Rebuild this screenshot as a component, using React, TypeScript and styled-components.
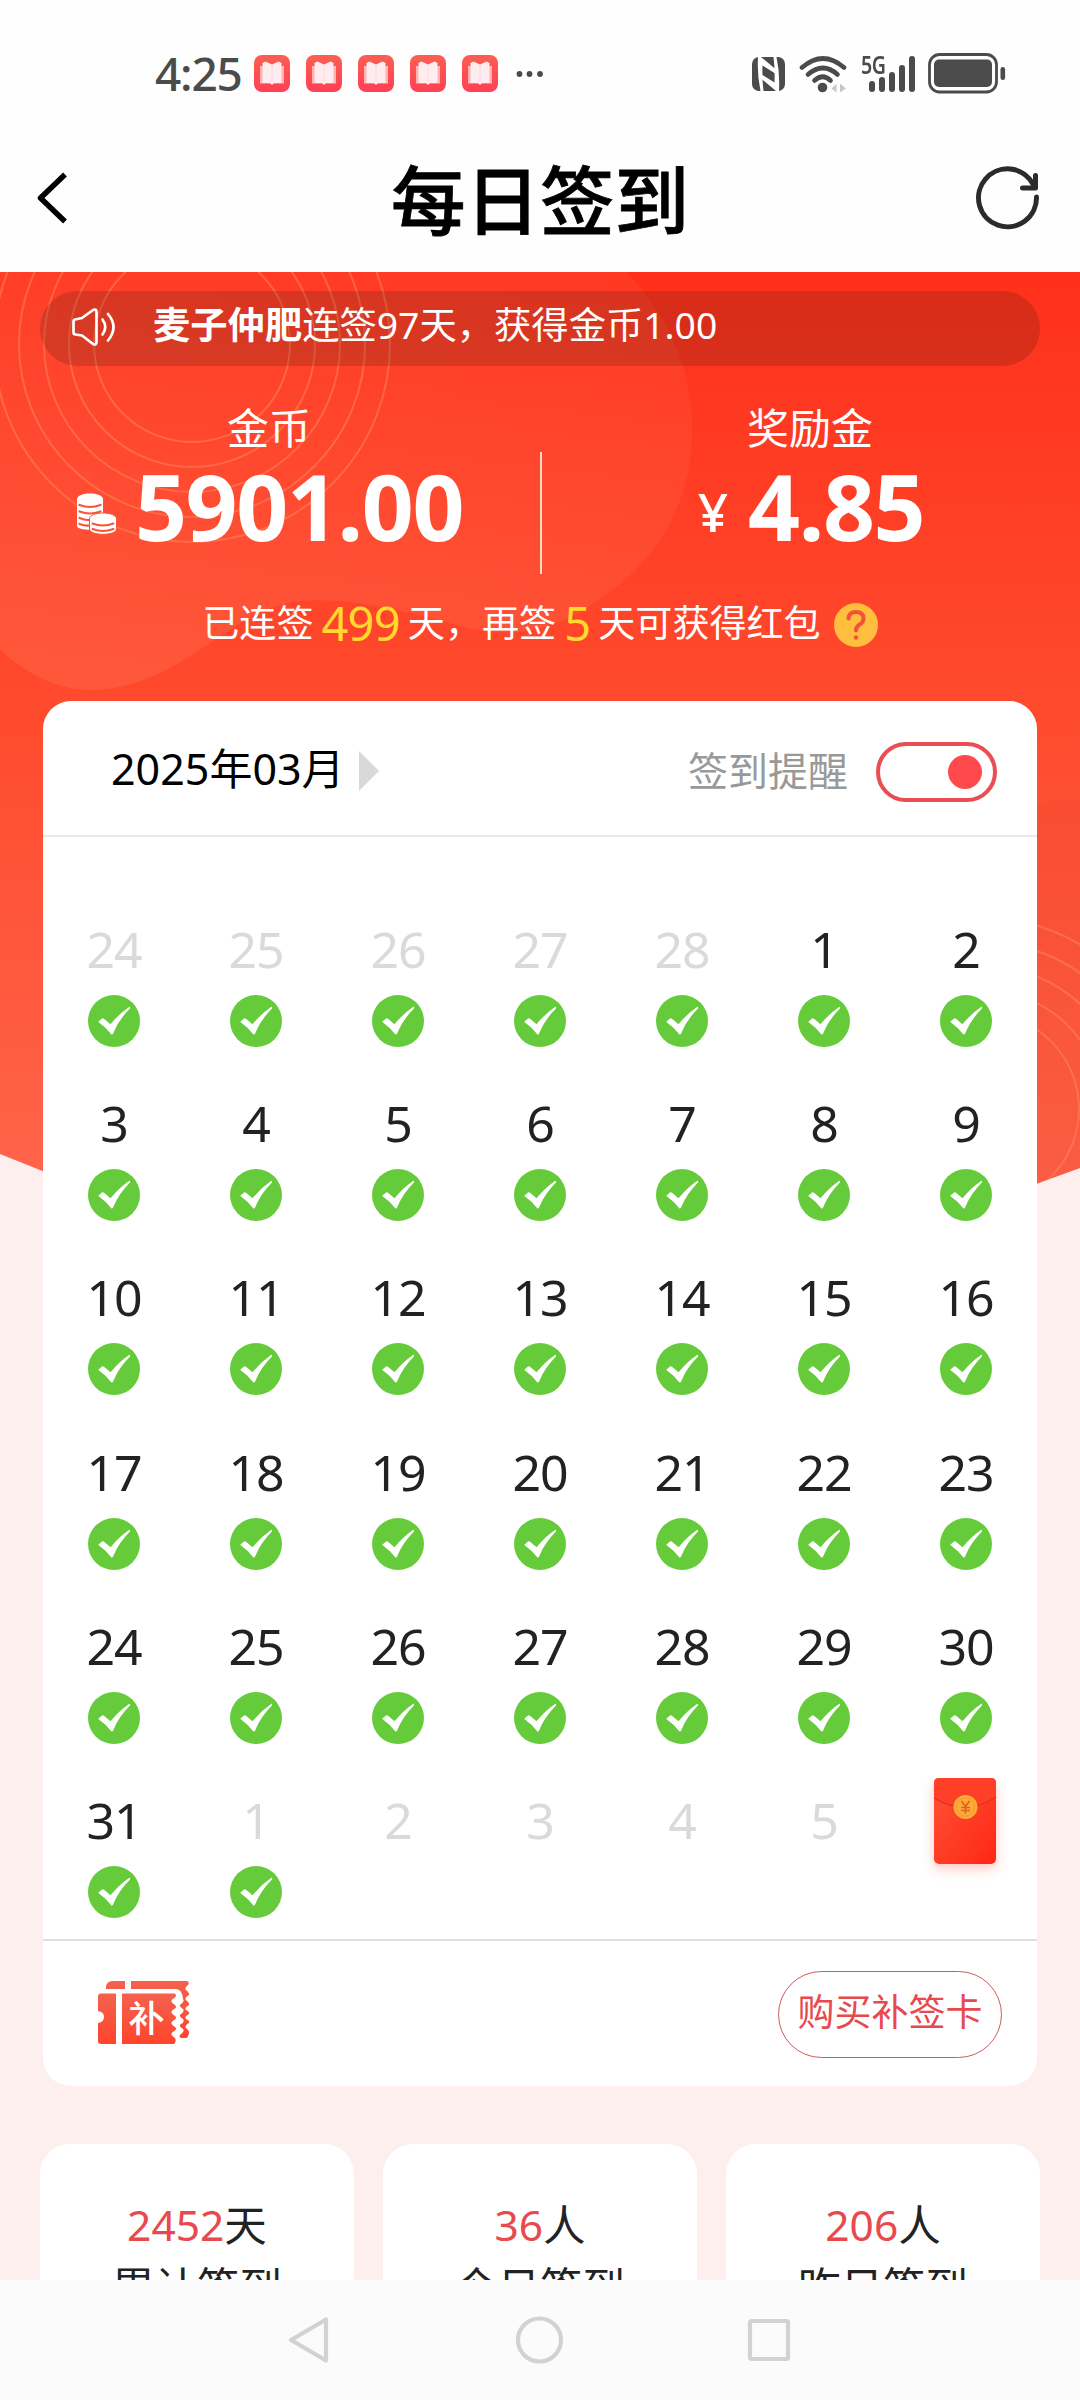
import React from "react";
import styled, { createGlobalStyle } from "styled-components";

const GlobalStyle = createGlobalStyle`
  * { box-sizing: border-box; }
  body {
    margin: 0;
    background: #fff;
    font-family: "Noto Sans", "Noto Sans CJK SC", sans-serif;
  }
  svg { display: block; flex: none; }
`;

const Screen = styled.div`
  width: 1080px;
  height: 2400px;
  display: flex;
  flex-direction: column;
  overflow: hidden;
  background: #fefefe;
`;

const StatusBar = styled.header`
  height: 124px;
  padding: 23px 74px 0 155px;
  display: flex;
  align-items: center;
  justify-content: space-between;
  color: #4b4b4b;
`;

const StatusGroup = styled.div<{ $gap: number }>`
  display: flex;
  align-items: center;
  gap: ${(p) => p.$gap}px;
`;

const Clock = styled.span`
  width: 83px;
  padding-bottom: 2px;
  font-size: 46px;
  line-height: 60px;
  font-weight: 500;
  letter-spacing: -1.2px;
`;

const Signal = styled.div`
  display: flex;
  align-items: flex-end;
  width: 53px;
  height: 38px;
`;

const NetworkLabel = styled.span`
  align-self: flex-start;
  width: 8px;
  font: 600 24.5px/20px "Noto Sans", sans-serif;
  letter-spacing: -0.5px;
  white-space: nowrap;
  transform: scaleX(0.8);
  transform-origin: 0 0;
`;

const SignalBars = styled.div`
  display: flex;
  align-items: flex-end;
  gap: 4px;
  padding-bottom: 1px;
`;

const SignalBar = styled.i<{ $h: number }>`
  width: 6px;
  height: ${(p) => p.$h}px;
  border-radius: 3px;
  background: #4b4b4b;
`;

const TitleBar = styled.div`
  height: 148px;
  padding: 0 39px 0 36px;
  display: flex;
  align-items: center;
  justify-content: space-between;
`;

const Title = styled.h1`
  margin: 0;
  padding: 3px 0 0 3px;
  font-size: 74.5px;
  line-height: 100px;
  font-weight: 500;
  color: #000;
  -webkit-text-stroke: 0.8px #000;
`;

const TitleSide = styled.div<{ $end?: boolean }>`
  width: 66px;
  display: flex;
  justify-content: ${(p) => (p.$end ? "flex-end" : "flex-start")};
`;

const Body = styled.main`
  position: relative;
  height: 2008px;
  flex: none;
  overflow: hidden;
  background: #feefef;
`;

const Backdrop = styled.svg`
  position: absolute;
  left: 0;
  top: 0;
`;

const Content = styled.div`
  position: relative;
  padding-top: 19px;
  display: flex;
  flex-direction: column;
`;

const Notice = styled.div`
  height: 75px;
  margin: 0 40px;
  padding-left: 32px;
  border-radius: 38px;
  background: rgba(40, 20, 10, 0.18);
  display: flex;
  align-items: center;
  gap: 35px;
  color: #fff;
  font-size: 37.3px;
  line-height: 60px;
  white-space: nowrap;

  svg { margin-bottom: 4px; }
`;

const NoticeText = styled.span`
  padding-bottom: 8px;
  b { font-weight: 700; }
`;

const Balances = styled.section`
  height: 207px;
  display: grid;
  grid-template-columns: 540px 2px 538px;
  color: #fff;
`;

const Balance = styled.div`
  padding: 35px 2px 0 0;
  display: flex;
  flex-direction: column;
  align-items: center;
`;

const BalanceLabel = styled.span`
  font-size: 42px;
  line-height: 54px;
`;

const Amount = styled.div<{ $gap: number }>`
  display: flex;
  align-items: center;
  gap: ${(p) => p.$gap}px;
  height: 104px;

  svg { margin-top: 13px; }
`;

const AmountValue = styled.strong`
  margin-right: -2px;
  padding-bottom: 2px;
  font-size: 91px;
  line-height: 102px;
  font-weight: 700;
  letter-spacing: -1.4px;
`;

const Yen = styled.span`
  padding-top: 9px;
  font-size: 53px;
  font-weight: 500;
`;

const BalanceRule = styled.i`
  height: 122px;
  margin-top: 86px;
  background: rgba(255, 238, 214, 0.9);
`;

const Streak = styled.p`
  height: 60px;
  margin: 20px 0 0;
  display: flex;
  align-items: center;
  justify-content: center;
  color: #fff;
  font-size: 37.1px;
  line-height: 60px;
  white-space: nowrap;
`;

const StreakCount = styled.em`
  margin: 0 8px;
  font-style: normal;
  font-size: 47px;
  letter-spacing: -0.8px;
  color: #ffd92e;
`;

const Help = styled.span`
  width: 44px;
  height: 44px;
  margin: 4px 0 0 13px;
  border-radius: 50%;
  background: #ffbe3d;
  display: flex;
  align-items: center;
  justify-content: center;
`;

const Card = styled.section`
  width: 994px;
  height: 1385px;
  margin: 48px 0 0 43px;
  border-radius: 28px;
  background: #fff;
`;

const CardHeader = styled.div`
  height: 136px;
  padding: 0 40px 0 68px;
  border-bottom: 2px solid #e9e9e9;
  display: flex;
  align-items: center;
`;

const Month = styled.span`
  padding-top: 2px;
  font-size: 43px;
  line-height: 60px;
  color: #000;
`;

const MonthArrow = styled.i`
  margin: 6px 0 0 14px;
  border-left: 20px solid #d9d9d9;
  border-top: 20px solid transparent;
  border-bottom: 20px solid transparent;
`;

const Reminder = styled.span`
  margin-left: auto;
  padding-top: 1px;
  font-size: 40px;
  color: #999;
`;

const Toggle = styled.div`
  width: 121px;
  height: 60px;
  margin: 7px 0 0 28px;
  padding-right: 11px;
  border: 4px solid #e94e54;
  border-radius: 30px;
  display: flex;
  align-items: center;
  justify-content: flex-end;
`;

const Knob = styled.i`
  width: 34px;
  height: 34px;
  border-radius: 50%;
  background: #ff494d;
`;

const Days = styled.div`
  height: 1104px;
  padding-top: 82px;
  border-bottom: 2px solid #dfdfdf;
  display: grid;
  grid-template-columns: repeat(7, 142px);
  grid-auto-rows: 174.2px;
  overflow: hidden;
`;

const Day = styled.div`
  display: flex;
  flex-direction: column;
  align-items: center;
`;

const DayNumber = styled.span<{ $muted: boolean }>`
  height: 60px;
  font-size: 50px;
  line-height: 60px;
  letter-spacing: -1px;
  color: ${(p) => (p.$muted ? "#dadada" : "#222")};
`;

const CheckMark = styled.svg`
  margin-top: 16px;
`;

const EnvelopeBox = styled.div`
  margin: -12px 2px 0 0;
`;

const CardFooter = styled.div`
  height: 145px;
  padding: 0 35px 0 55px;
  display: flex;
  align-items: center;
  justify-content: space-between;
`;

const BuyButton = styled.button`
  width: 224px;
  height: 87px;
  margin-top: 1px;
  padding: 0 0 4px;
  border: 1.5px solid #cf5a60;
  border-radius: 44px;
  background: #fff;
  color: #e8494e;
  font: 400 37px/50px "Noto Sans", "Noto Sans CJK SC", sans-serif;
`;

const Stats = styled.section`
  margin: 58px 40px 0;
  display: grid;
  grid-template-columns: repeat(3, 314px);
  justify-content: space-between;
`;

const Stat = styled.div`
  height: 220px;
  padding: 51px 0 0;
  border-radius: 30px;
  background: #fff;
  color: #222;
  font-size: 42.5px;
  line-height: 60px;
  text-align: center;
`;

const StatNumber = styled.span`
  color: #e8494e;
`;

const StatLabel = styled.div`
  padding-top: 2px;
`;

const NavBar = styled.nav`
  height: 120px;
  flex: none;
  padding: 0 289px 0 286px;
  background: #fbfbfb;
  display: flex;
  align-items: center;
  justify-content: space-between;
`;

const BookIcon = () => (
  <svg width="36" height="37" viewBox="0 0 36 37">
    <defs>
      <linearGradient id="book" x1="0" y1="0" x2="0" y2="1">
        <stop offset="0" stopColor="#fb5f50" />
        <stop offset="1" stopColor="#ff3f55" />
      </linearGradient>
    </defs>
    <rect width="36" height="37" rx="8" fill="url(#book)" />
    <path d="M6 11h24v17.500H6z" fill="#ffb3b3" />
    <path d="M8.500 8l3-1.500L18 9.500l6.500-3L27.500 8v20h-7.500l-2 2-2-2H8.500z" fill="#ffecef" />
    <path d="M18 10v18" stroke="#ffdbe0" strokeWidth="1" />
  </svg>
);

const MoreDots = () => (
  <svg width="30" height="8" viewBox="0 0 30 8" fill="#4b4b4b">
    <circle cx="5.500" cy="4" r="2.900" />
    <circle cx="15.500" cy="4" r="2.900" />
    <circle cx="26" cy="4" r="2.900" />
  </svg>
);

const NfcIcon = () => (
  <svg width="33" height="34" viewBox="0 0 33 34">
    <rect width="33" height="34" rx="7" fill="#4b4b4b" />
    <path d="M6 0H9L24 12.500V17L10.500 8.500Q10 22 11.500 34H8.500Q5 18 6 0z" fill="#fff" />
    <path d="M27 34H24L9 21.500V17L22.500 25.500Q23 12 21.500 0H24.500Q28 16 27 34z" fill="#fff" />
  </svg>
);

const WifiIcon = () => (
  <svg width="48" height="38" viewBox="0 0 48 38" fill="none" stroke="#4b4b4b" strokeWidth="4.600" strokeLinecap="round">
    <path d="M3 12.500Q24-5.500 45 12.500" />
    <path d="M9 19.500Q24 6.500 38.500 19.500" />
    <path d="M15.500 25.500Q24 18 31.500 25.500" />
    <circle cx="23.500" cy="32.500" r="4.800" fill="#4b4b4b" stroke="none" />
    <path d="M37.500 28.500v9l-5-4zM41 28.500v9l6-4z" fill="#c8c8c8" stroke="none" />
  </svg>
);

const BatteryIcon = () => (
  <svg width="78" height="41" viewBox="0 0 78 41">
    <rect x="1.500" y="1.500" width="67" height="37.500" rx="10" fill="none" stroke="#4b4b4b" strokeWidth="2.800" />
    <rect x="6" y="6.500" width="58" height="27.500" rx="5" fill="#4b4b4b" />
    <rect x="72.500" y="14" width="4.600" height="13" rx="2.300" fill="#4b4b4b" />
  </svg>
);

const BackIcon = () => (
  <svg width="32" height="56" viewBox="0 0 32 56" fill="none" stroke="#000" strokeWidth="5.500" strokeLinejoin="round">
    <path d="M29 4.500L4.500 28 29 51.500" />
  </svg>
);

const RefreshIcon = () => (
  <svg width="66" height="66" viewBox="0 0 66 66" fill="none" stroke="#2b2b2b" strokeWidth="5" strokeLinecap="round" strokeLinejoin="round">
    <path d="M61.500 32A29 29 0 1 1 58 19" />
    <path d="M60.500 10.500V23H47.500" />
  </svg>
);

const SpeakerIcon = () => (
  <svg width="46" height="38" viewBox="0 0 46 38" fill="none" stroke="#fff" strokeWidth="2.700" strokeLinecap="round" strokeLinejoin="round">
    <path d="M3 11.500Q1.500 11.500 1.500 14v10q0 2.500 2 2.500l6.500 1L21 36q3.500 1.500 3.500-2V4q0-3.500-3.500-2L10 10z" />
    <path d="M30.500 11.500Q36 19 30.500 26.500" />
    <path d="M36 6Q47 19 36 32.500" />
  </svg>
);

const CoinsIcon = () => (
  <svg width="40" height="42" viewBox="0 0 40 42">
    <path d="M0 6C0-1.500 26-1.500 26 6v27c0 5-26 5-26 0z" fill="#fff" />
    <g fill="none" stroke="#fb5335" strokeWidth="2.200" strokeLinecap="round">
      <path d="M2.500 12q10.500 4 21 0M2.500 18.500q10.500 4 21 0M2.500 25q7 3 12 1.500M2.500 31q5 2 10 1.500" />
    </g>
    <path d="M12.500 26C12.500 18 39.500 18 39.500 26v10c0 7-27 7-27 0z" fill="#fff" stroke="#fb5335" strokeWidth="1" />
    <path d="M15.500 30.500q10.500 4 21 0M15.500 36q10.500 4 21 0" fill="none" stroke="#fb5335" strokeWidth="2" strokeLinecap="round" />
  </svg>
);

const QuestionIcon = () => (
  <svg width="24" height="32" viewBox="0 0 24 32" fill="none" stroke="#f4513a" strokeWidth="4" strokeLinecap="round" strokeLinejoin="round">
    <path d="M4.500 9.500Q5 3 12 3q7.500 0 7.500 6.500 0 4-4.500 6.500-3 2-3 5.500" />
    <circle cx="12" cy="28.500" r="2.200" fill="#f4513a" stroke="none" />
  </svg>
);

const Check = () => (
  <CheckMark width="52" height="52" viewBox="0 0 52 52">
    <circle cx="26" cy="26" r="26" fill="#66cb3a" />
    <path d="M10.500 26.500l3.500-3q1-.5 2 .3l6.500 5.500q8-10 18.500-17.300 1.500-.6 1 1.500Q31 24.500 26 36.500q-1.500 4.500-3 2.500-5.500-7-12-11.500-1-.5-.5-1z" fill="#fff" />
  </CheckMark>
);

const Envelope = () => (
  <EnvelopeBox>
    <svg width="94" height="112" viewBox="-16 0 94 112">
      <defs>
        <linearGradient id="env" x1="0" y1="0" x2="1" y2="1">
          <stop offset="0" stopColor="#ff5238" />
          <stop offset="1" stopColor="#ff2714" />
        </linearGradient>
        <filter id="envShadow" x="-40%" y="-30%" width="180%" height="170%">
          <feDropShadow dx="0" dy="5" stdDeviation="6" floodColor="#ff5038" floodOpacity="0.3" />
        </filter>
      </defs>
      <rect width="62" height="86" rx="5" fill="url(#env)" filter="url(#envShadow)" />
      <path d="M0 20Q31 39 62 19V5q0-5-5-5H5Q0 0 0 5z" fill="#ff3f28" />
      <path d="M0 20Q31 39 62 19" fill="none" stroke="#dc3320" strokeWidth="1.400" />
      <circle cx="31.500" cy="29" r="12" fill="#fbac35" />
      <circle cx="31.500" cy="29" r="9" fill="none" stroke="#f8983a" strokeWidth="1" />
      <path d="M27.500 23l4 5.500 4-5.500M27 29.500h9M27 32.500h9M31.500 28.500v7" fill="none" stroke="#ea5b26" strokeWidth="1.700" />
    </svg>
  </EnvelopeBox>
);

const TicketIcon = () => (
  <svg width="92" height="66" viewBox="0 0 92 66">
    <defs>
      <linearGradient id="ticket" x1="0" y1="0" x2="0" y2="1">
        <stop offset="0" stopColor="#f4614d" />
        <stop offset="1" stopColor="#ff452c" />
      </linearGradient>
    </defs>
    <g fill="url(#ticket)">
      <path d="M8 8V6.500Q8 0 15 0h12v8zM33 0H89q3 1 1 4-4 3-2 5 4 3 3 5-5 3-3 5 4 3 3 5-5 3-3 5 4 2 3 4-5 3-3 5 4 2 3 4-5 3-3 5 4 3 3 5-1 5-3 5H83q-3-2 0-4 4-3 2-5-5-3-2-5 4-2 2-5-5-3-2-5 4-3 2-5-5-3-2-5 4-3 2-5Q84 8 78 8H33z" />
      <path d="M3 12.500h15V63H3q-3 0-3-3V42q6-1 6-6 0-5-6-6V15.500q0-3 3-3z" />
      <path d="M24 12.500h53q2 2 0 4-6 3-2 6 5 3 2 5-6 3-2 6 5 3 2 5-6 3-2 6 5 3 2 5-6 3-2 6 5 3 1 7.500H24z" />
    </g>
    <text x="48.500" y="51" fill="#fff" fontFamily="Noto Sans CJK SC, sans-serif" fontSize="36" fontWeight="500" textAnchor="middle">补</text>
  </svg>
);

const NavBackIcon = () => (
  <svg width="46" height="52" viewBox="0 0 46 52" fill="none" stroke="#d2d2d2" strokeWidth="4.200" strokeLinejoin="round">
    <path d="M40 5.500v41L5 26z" />
  </svg>
);

const NavHomeIcon = () => (
  <svg width="48" height="48" viewBox="0 0 48 48" fill="none" stroke="#d2d2d2" strokeWidth="4.200">
    <circle cx="23.500" cy="24" r="21.500" />
  </svg>
);

const NavRecentIcon = () => (
  <svg width="44" height="44" viewBox="0 0 44 44" fill="none" stroke="#d2d2d2" strokeWidth="4.200">
    <rect x="3" y="3" width="38" height="38" rx="1.500" />
  </svg>
);

const RINGS_LEFT = [98, 123, 148, 173, 198];
const RINGS_RIGHT = [96, 119, 143, 167, 191];

const HeroArt = () => (
  <Backdrop width="1080" height="930" viewBox="0 272 1080 930">
    <defs>
      <linearGradient id="hero" x1="0" y1="0" x2="0" y2="1">
        <stop offset="0" stopColor="#ff301b" />
        <stop offset="0.46" stopColor="#fe4a2d" />
        <stop offset="1" stopColor="#ff654b" />
      </linearGradient>
      <linearGradient id="blob" x1="1" y1="0" x2="0" y2="1">
        <stop offset="0" stopColor="#ffa080" stopOpacity="0.07" />
        <stop offset="1" stopColor="#ffa080" stopOpacity="0.18" />
      </linearGradient>
      <clipPath id="heroClip">
        <path d="M0 272H1080V1168L1036 1184H75L0 1154z" />
      </clipPath>
    </defs>
    <g clipPath="url(#heroClip)">
      <rect y="272" width="1080" height="930" fill="url(#hero)" />
      <path d="M0 272H626Q692 340 692 430C692 500 660 560 598 600C550 634 510 638 464 627C410 612 350 597 300 601C230 608 180 690 90 690Q45 690 0 650z" fill="url(#blob)" />
      <path d="M1000 820Q1040 795 1080 800V1200H1000z" fill="#e8452f" opacity="0.22" />
      <g fill="none" stroke="#ff8a5c" strokeOpacity="0.5" strokeWidth="2">
        {RINGS_LEFT.map((r) => <circle key={r} cx="192" cy="344" r={r} />)}
        {RINGS_RIGHT.map((r) => <circle key={r} cx="983" cy="1109" r={r} />)}
      </g>
    </g>
  </Backdrop>
);

type DayInfo = { n: number; muted: boolean; signed: boolean; gift?: boolean };

const days: DayInfo[] = [
  ...[24, 25, 26, 27, 28].map((n) => ({ n, muted: true, signed: true })),
  ...Array.from({ length: 31 }, (_, i) => ({ n: i + 1, muted: false, signed: true })),
  ...[1, 2, 3, 4, 5].map((n) => ({ n, muted: true, signed: n === 1 })),
  { n: 6, muted: true, signed: false, gift: true },
];

const stats = [
  { value: "2452", unit: "天", label: "累计签到" },
  { value: "36", unit: "人", label: "今日签到" },
  { value: "206", unit: "人", label: "昨日签到" },
];

export default function App() {
  return (
    <Screen lang="zh-CN">
      <GlobalStyle />
      <StatusBar>
        <StatusGroup $gap={16}>
          <Clock>4:25</Clock>
          {[0, 1, 2, 3, 4].map((i) => <BookIcon key={i} />)}
          <MoreDots />
        </StatusGroup>
        <StatusGroup $gap={14}>
          <NfcIcon />
          <WifiIcon />
          <Signal>
            <NetworkLabel>5G</NetworkLabel>
            <SignalBars>
              {[11, 15, 20, 27, 36].map((h) => <SignalBar key={h} $h={h} />)}
            </SignalBars>
          </Signal>
          <BatteryIcon />
        </StatusGroup>
      </StatusBar>
      <TitleBar>
        <TitleSide><BackIcon /></TitleSide>
        <Title>每日签到</Title>
        <TitleSide $end><RefreshIcon /></TitleSide>
      </TitleBar>

      <Body>
        <HeroArt />
        <Content>
          <Notice>
            <SpeakerIcon />
            <NoticeText><b>麦子仲肥</b>连签97天，获得金币1.00</NoticeText>
          </Notice>
          <Balances>
            <Balance>
              <BalanceLabel>金币</BalanceLabel>
              <Amount $gap={18}>
                <CoinsIcon />
                <AmountValue>5901.00</AmountValue>
              </Amount>
            </Balance>
            <BalanceRule />
            <Balance>
              <BalanceLabel>奖励金</BalanceLabel>
              <Amount $gap={20}>
                <Yen>¥</Yen>
                <AmountValue>4.85</AmountValue>
              </Amount>
            </Balance>
          </Balances>
          <Streak>
            已连签<StreakCount>499</StreakCount>天，再签<StreakCount>5</StreakCount>天可获得红包
            <Help><QuestionIcon /></Help>
          </Streak>

          <Card>
            <CardHeader>
              <Month>2025年03月</Month>
              <MonthArrow />
              <Reminder>签到提醒</Reminder>
              <Toggle><Knob /></Toggle>
            </CardHeader>
            <Days>
              {days.map((d, i) => (
                <Day key={i}>
                  {d.gift ? <Envelope /> : <DayNumber $muted={d.muted}>{d.n}</DayNumber>}
                  {d.signed && <Check />}
                </Day>
              ))}
            </Days>
            <CardFooter>
              <TicketIcon />
              <BuyButton>购买补签卡</BuyButton>
            </CardFooter>
          </Card>

          <Stats>
            {stats.map((s) => (
              <Stat key={s.label}>
                <StatNumber>{s.value}</StatNumber>{s.unit}
                <StatLabel>{s.label}</StatLabel>
              </Stat>
            ))}
          </Stats>
        </Content>
      </Body>

      <NavBar>
        <NavBackIcon />
        <NavHomeIcon />
        <NavRecentIcon />
      </NavBar>
    </Screen>
  );
}
